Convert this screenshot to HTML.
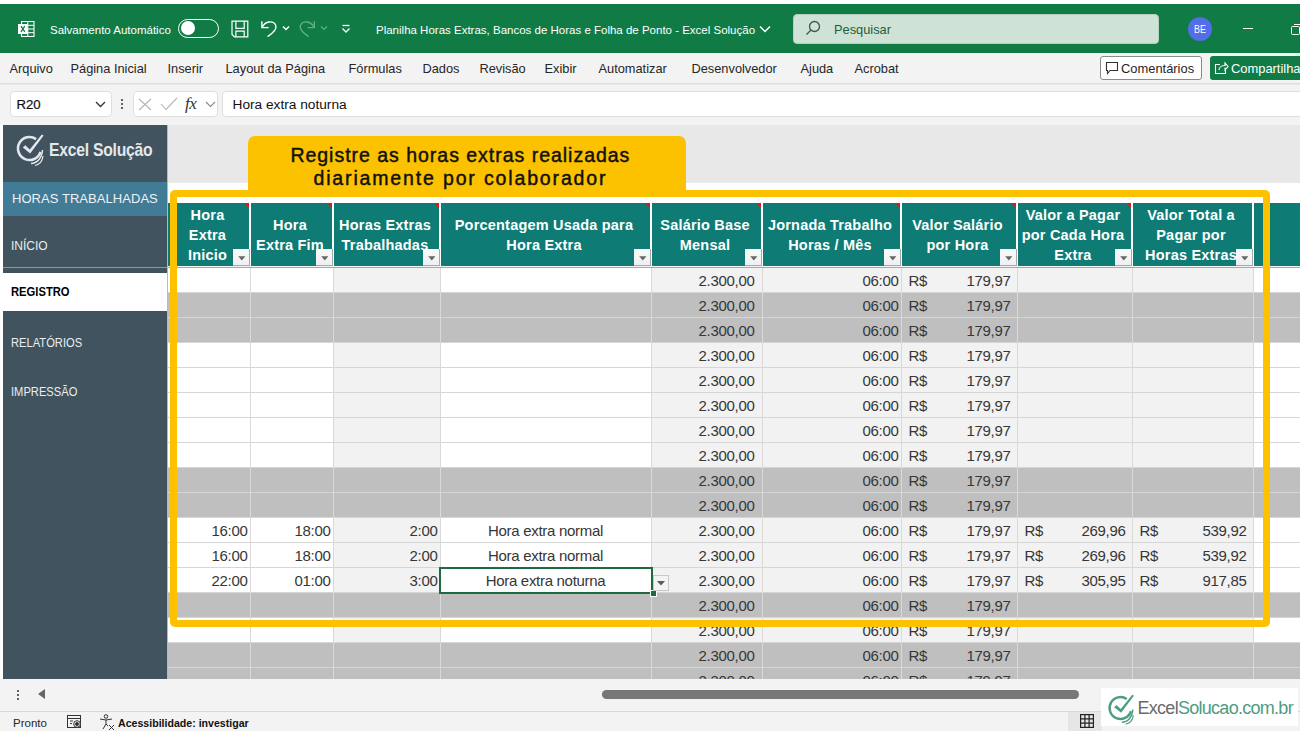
<!DOCTYPE html><html><head><meta charset="utf-8"><style>
html,body{margin:0;padding:0;width:1300px;height:731px;overflow:hidden;background:#f3f3f3}
body{position:relative;font-family:"Liberation Sans", sans-serif}
.b{position:absolute}
.t{position:absolute;white-space:nowrap}
</style></head><body>
<div class="b" style="left:0px;top:0px;width:1300px;height:731px;background:#f3f3f3"></div>
<div class="b" style="left:0px;top:0px;width:1300px;height:4px;background:#ffffff"></div>
<div class="b" style="left:0px;top:4px;width:1300px;height:48.5px;background:#117b46"></div>
<svg class="b" style="left:18px;top:21px" width="17" height="16" viewBox="0 0 17 16">
<rect x="3.5" y="0.5" width="12.5" height="15" fill="none" stroke="#fff" stroke-width="1.1"/>
<line x1="3.5" y1="4.3" x2="16" y2="4.3" stroke="#fff" stroke-width="1"/><line x1="3.5" y1="8" x2="16" y2="8" stroke="#fff" stroke-width="1"/><line x1="3.5" y1="11.7" x2="16" y2="11.7" stroke="#fff" stroke-width="1"/>
<line x1="9.8" y1="0.5" x2="9.8" y2="15.5" stroke="#fff" stroke-width="1"/>
<rect x="0" y="3" width="9.6" height="10" fill="#fff"/>
<path d="M3 5.2 L6.8 10.8 M6.8 5.2 L3 10.8" stroke="#117b46" stroke-width="1.3"/>
</svg>
<div class="t" style="left:50px;top:19.6px;font-size:11.5px;line-height:20px;color:#fff;font-weight:normal;">Salvamento Automático</div>
<div class="b" style="left:178px;top:18.5px;width:41px;height:19px;border:1.5px solid #fff;border-radius:11px;box-sizing:border-box"></div>
<div class="b" style="left:180.5px;top:21px;width:14px;height:14px;background:#fff;border-radius:50%"></div>
<svg class="b" style="left:231px;top:20px" width="18" height="18" viewBox="0 0 18 18" fill="none" stroke="#fff" stroke-width="1.2">
<path d="M1 1.1 H16.8 V16.9 H3.5 L1 14.4 Z"/><path d="M4.9 1.1 V8.4 H13.2 V1.1"/><path d="M4.9 16.9 V11.2 H13.2 V16.9"/>
</svg>
<svg class="b" style="left:260px;top:19px" width="20" height="20" viewBox="0 0 20 20" fill="none" stroke="#fff" stroke-width="1.4">
<path d="M1.9 2.3 V8.6 H8.6"/><path d="M2.2 8.3 C5 2, 13.5 1, 15.8 6.5 C17 10, 13 14, 7.6 17.6"/>
</svg>
<svg class="b" style="left:282px;top:25px" width="8" height="6" viewBox="0 0 8 6" fill="none" stroke="#fff" stroke-width="1.4"><path d="M1 1.5 L4 4.5 L7 1.5"/></svg>
<svg class="b" style="left:299px;top:19px" width="20" height="20" viewBox="0 0 20 20" fill="none" stroke="#5fb080" stroke-width="1.4">
<path d="M15.3 2.3 V8.6 H8.6"/><path d="M15 8.3 C12.2 2, 3.7 1, 1.4 6.5 C0.2 10, 4.2 14, 9.6 17.6"/>
</svg>
<svg class="b" style="left:320px;top:25px" width="8" height="6" viewBox="0 0 8 6" fill="none" stroke="#5fb080" stroke-width="1.2"><path d="M1 1.5 L4 4.5 L7 1.5"/></svg>
<svg class="b" style="left:341px;top:24px" width="10" height="10" viewBox="0 0 10 10" fill="none" stroke="#fff" stroke-width="1.3"><path d="M1.5 1.5 H8.5"/><path d="M1.5 4.5 L5 8 L8.5 4.5"/></svg>
<div class="t" style="left:376px;top:19.7px;font-size:11.5px;line-height:20px;color:#fff;font-weight:normal;">Planilha Horas Extras, Bancos de Horas e Folha de Ponto - Excel Solução</div>
<svg class="b" style="left:759px;top:25px" width="12" height="8" viewBox="0 0 12 8" fill="none" stroke="#fff" stroke-width="1.5"><path d="M1 1.5 L6 6.5 L11 1.5"/></svg>
<div class="b" style="left:793px;top:13.5px;width:366px;height:30px;background:#cee2d6;border:1px solid #b5cfbf;border-radius:4px;box-sizing:border-box"></div>
<svg class="b" style="left:805px;top:20px" width="16" height="16" viewBox="0 0 16 16" fill="none" stroke="#3a5a48" stroke-width="1.3"><circle cx="9.5" cy="6.5" r="5"/><path d="M6 10 L1.5 14.5"/></svg>
<div class="t" style="left:834px;top:19.6px;font-size:12.8px;line-height:20px;color:#1f5e3a;font-weight:normal;">Pesquisar</div>
<div class="b" style="left:1188px;top:17px;width:24px;height:24px;background:#546de8;border-radius:50%"></div>
<div class="t" style="left:900px;width:600px;text-align:center;top:19.0px;font-size:10.5px;line-height:20px;color:#fff;font-weight:normal;transform:scaleX(0.85);">BE</div>
<div class="b" style="left:1243px;top:28px;width:10px;height:1.3px;background:#fff"></div>
<div class="b" style="left:1291px;top:25.5px;width:9px;height:9px;border:1.2px solid #fff;border-radius:1.5px;box-sizing:border-box"></div>
<div class="b" style="left:1293.5px;top:23.5px;width:8px;height:1.2px;background:#fff"></div>
<div class="b" style="left:0px;top:52.5px;width:1300px;height:30.5px;background:#f3f3f3"></div>
<div class="b" style="left:0px;top:83px;width:1300px;height:1px;background:#dcdcdc"></div>
<div class="b" style="left:0px;top:84px;width:1300px;height:1px;background:#e9e9e9"></div>
<div class="t" style="left:9.5px;top:58.8px;font-size:12.8px;line-height:20px;color:#262626;font-weight:normal;">Arquivo</div>
<div class="t" style="left:70.5px;top:58.8px;font-size:12.8px;line-height:20px;color:#262626;font-weight:normal;">Página Inicial</div>
<div class="t" style="left:167.5px;top:58.8px;font-size:12.8px;line-height:20px;color:#262626;font-weight:normal;">Inserir</div>
<div class="t" style="left:225.5px;top:58.8px;font-size:12.8px;line-height:20px;color:#262626;font-weight:normal;">Layout da Página</div>
<div class="t" style="left:348.5px;top:58.8px;font-size:12.8px;line-height:20px;color:#262626;font-weight:normal;">Fórmulas</div>
<div class="t" style="left:422.5px;top:58.8px;font-size:12.8px;line-height:20px;color:#262626;font-weight:normal;">Dados</div>
<div class="t" style="left:479.5px;top:58.8px;font-size:12.8px;line-height:20px;color:#262626;font-weight:normal;">Revisão</div>
<div class="t" style="left:544.5px;top:58.8px;font-size:12.8px;line-height:20px;color:#262626;font-weight:normal;">Exibir</div>
<div class="t" style="left:598.5px;top:58.8px;font-size:12.8px;line-height:20px;color:#262626;font-weight:normal;">Automatizar</div>
<div class="t" style="left:691.5px;top:58.8px;font-size:12.8px;line-height:20px;color:#262626;font-weight:normal;">Desenvolvedor</div>
<div class="t" style="left:800.5px;top:58.8px;font-size:12.8px;line-height:20px;color:#262626;font-weight:normal;">Ajuda</div>
<div class="t" style="left:854.5px;top:58.8px;font-size:12.8px;line-height:20px;color:#262626;font-weight:normal;">Acrobat</div>
<div class="b" style="left:1100px;top:56px;width:102px;height:24px;background:#fff;border:1px solid #8a8a8a;border-radius:3px;box-sizing:border-box"></div>
<svg class="b" style="left:1105px;top:61px" width="14" height="14" viewBox="0 0 14 14" fill="none" stroke="#333" stroke-width="1.1"><path d="M1.5 1.5 H12.5 V9.5 H5 L2.5 12.5 V9.5 H1.5 Z"/></svg>
<div class="t" style="left:1121px;top:58.5px;font-size:12.9px;line-height:20px;color:#262626;font-weight:normal;">Comentários</div>
<div class="b" style="left:1210px;top:56px;width:100px;height:24px;background:#117b46;border-radius:3px"></div>
<svg class="b" style="left:1214px;top:61px" width="15" height="14" viewBox="0 0 15 14" fill="none" stroke="#fff" stroke-width="1.1"><path d="M6 3.5 H1.5 V12.5 H11.5 V9"/><path d="M5 9 C5 6, 8 4.5, 11 4.5 V2 L14 5.5 L11 9 V6.5"/></svg>
<div class="t" style="left:1231px;top:58.5px;font-size:12.9px;line-height:20px;color:#fff;font-weight:normal;">Compartilhar</div>
<div class="b" style="left:0px;top:85px;width:1300px;height:40px;background:#f3f3f3"></div>
<div class="b" style="left:10px;top:91px;width:102px;height:26px;background:#fff;border:1px solid #dedede;border-radius:4px;box-sizing:border-box"></div>
<div class="t" style="left:16.5px;top:94.5px;font-size:13.2px;line-height:20px;color:#111;font-weight:normal;-webkit-text-stroke:0.2px #111;">R20</div>
<svg class="b" style="left:95px;top:101px" width="11" height="7" viewBox="0 0 11 7" fill="none" stroke="#333" stroke-width="1.3"><path d="M1 1 L5.5 5.5 L10 1"/></svg>
<div class="b" style="left:121px;top:99px;width:2.2px;height:2.2px;background:#333;border-radius:50%"></div>
<div class="b" style="left:121px;top:103px;width:2.2px;height:2.2px;background:#333;border-radius:50%"></div>
<div class="b" style="left:121px;top:107px;width:2.2px;height:2.2px;background:#333;border-radius:50%"></div>
<div class="b" style="left:132.5px;top:91px;width:85px;height:26px;background:#fff;border:1px solid #dedede;border-radius:4px;box-sizing:border-box"></div>
<svg class="b" style="left:138px;top:98px" width="14" height="13" viewBox="0 0 14 13" fill="none" stroke="#b5b5b5" stroke-width="1.1"><path d="M1 1 L13 12 M13 1 L1 12"/></svg>
<svg class="b" style="left:160px;top:97px" width="18" height="14" viewBox="0 0 18 14" fill="none" stroke="#b5b5b5" stroke-width="1.1"><path d="M1 7 L6 12.5 L17 1"/></svg>
<div class="t" style="left:185px;top:93.5px;font-size:17px;line-height:20px;color:#333;font-weight:normal;font-family:'Liberation Serif',serif;letter-spacing:-0.5px;"><i>fx</i></div>
<svg class="b" style="left:205px;top:101px" width="11" height="7" viewBox="0 0 11 7" fill="none" stroke="#8a8a8a" stroke-width="1.1"><path d="M1 1 L5.5 5.5 L10 1"/></svg>
<div class="b" style="left:222px;top:91px;width:1100px;height:26px;background:#fff;border:1px solid #dedede;border-radius:4px;box-sizing:border-box"></div>
<div class="t" style="left:232.5px;top:94.5px;font-size:13.7px;line-height:20px;color:#111;font-weight:normal;">Hora extra noturna</div>
<div class="b" style="left:0px;top:125px;width:1300px;height:554px;background:#ffffff"></div>
<div class="b" style="left:168px;top:125px;width:1132px;height:58px;background:#e8e8e8"></div>
<div class="b" style="left:168px;top:183px;width:1132px;height:20px;background:#ffffff"></div>
<div class="b" style="left:3px;top:125px;width:164.2px;height:554px;background:#40535e"></div>
<div class="b" style="left:167.2px;top:125px;width:1px;height:554px;background:#b8b8b8"></div>
<div class="b" style="left:3px;top:182px;width:164.2px;height:34px;background:#427b95"></div>
<div class="t" style="left:12px;top:189.2px;font-size:13px;line-height:20px;color:#eef2f5;font-weight:normal;letter-spacing:0.05px;">HORAS TRABALHADAS</div>
<div class="t" style="left:11px;top:236.3px;font-size:12px;line-height:20px;color:#e9eef1;font-weight:normal;">INÍCIO</div>
<div class="b" style="left:3px;top:267px;width:164px;height:1.2px;background:#8d99a0"></div>
<div class="b" style="left:3px;top:273px;width:164px;height:38px;background:#ffffff"></div>
<div class="t" style="left:11px;top:282.3px;font-size:12px;line-height:20px;color:#000;font-weight:bold;transform:scaleX(0.935);transform-origin:0 0;">REGISTRO</div>
<div class="t" style="left:11px;top:332.5px;font-size:12px;line-height:20px;color:#e9eef1;font-weight:normal;transform:scaleX(0.93);transform-origin:0 0;">RELATÓRIOS</div>
<div class="t" style="left:11px;top:382.3px;font-size:12px;line-height:20px;color:#e9eef1;font-weight:normal;transform:scaleX(0.93);transform-origin:0 0;">IMPRESSÃO</div>
<svg class="b" style="left:0px;top:120px" width="60" height="60" viewBox="0 120 60 60">
<path d="M36.1 139.1 A11.5 11.5 0 1 0 40.5 151.9" fill="none" stroke="#e1e7eb" stroke-width="2.6"/>
<path d="M22.8 147.6 L25.2 145.3 L29.8 149.6 L41.8 134.6 L43.6 135.6 L30.2 153.6 Z" fill="#e1e7eb"/>
<path d="M31 163.5 C37 163.5, 42 158, 42.5 150" fill="none" stroke="#e1e7eb" stroke-width="1.5"/>
<path d="M35 165.5 C39.5 164.5, 42.5 161, 43 156" fill="none" stroke="#e1e7eb" stroke-width="1.2"/>
</svg>
<div class="t" style="left:49px;top:139.8px;font-size:18.5px;line-height:20px;color:#e2e8ec;font-weight:bold;letter-spacing:-0.3px;transform:scaleX(0.85);transform-origin:0 0">Excel Solução</div>
<div class="b" style="left:168px;top:203px;width:1132px;height:62.5px;background:#0e7b74"></div>
<div class="b" style="left:168px;top:265.5px;width:1132px;height:1px;background:#f4f4f4"></div>
<div class="b" style="left:168px;top:266.5px;width:1132px;height:1.5px;background:#a8a8a8"></div>
<div class="b" style="left:249px;top:203px;width:1.8px;height:63px;background:#ffffff"></div>
<div class="b" style="left:332px;top:203px;width:1.8px;height:63px;background:#ffffff"></div>
<div class="b" style="left:439px;top:203px;width:1.8px;height:63px;background:#ffffff"></div>
<div class="b" style="left:650px;top:203px;width:1.8px;height:63px;background:#ffffff"></div>
<div class="b" style="left:761px;top:203px;width:1.8px;height:63px;background:#ffffff"></div>
<div class="b" style="left:900px;top:203px;width:1.8px;height:63px;background:#ffffff"></div>
<div class="b" style="left:1016px;top:203px;width:1.8px;height:63px;background:#ffffff"></div>
<div class="b" style="left:1131px;top:203px;width:1.8px;height:63px;background:#ffffff"></div>
<div class="b" style="left:1252px;top:203px;width:1.8px;height:63px;background:#ffffff"></div>
<div class="b" style="left:176px;top:268px;width:74px;height:25px;background:#ffffff"></div>
<div class="b" style="left:250px;top:268px;width:83px;height:25px;background:#ffffff"></div>
<div class="b" style="left:333px;top:268px;width:107px;height:25px;background:#f2f2f2"></div>
<div class="b" style="left:440px;top:268px;width:211px;height:25px;background:#ffffff"></div>
<div class="b" style="left:651px;top:268px;width:111px;height:25px;background:#f2f2f2"></div>
<div class="b" style="left:762px;top:268px;width:139px;height:25px;background:#f2f2f2"></div>
<div class="b" style="left:901px;top:268px;width:116px;height:25px;background:#f2f2f2"></div>
<div class="b" style="left:1017px;top:268px;width:115px;height:25px;background:#f2f2f2"></div>
<div class="b" style="left:1132px;top:268px;width:121px;height:25px;background:#f2f2f2"></div>
<div class="b" style="left:1253px;top:268px;width:47px;height:25px;background:#ffffff"></div>
<div class="b" style="left:168px;top:292px;width:1132px;height:1px;background:#d6d6d6"></div>
<div class="b" style="left:168px;top:293px;width:1132px;height:25px;background:#bfbfbf"></div>
<div class="b" style="left:168px;top:317px;width:1132px;height:1px;background:#d6d6d6"></div>
<div class="b" style="left:168px;top:318px;width:1132px;height:25px;background:#bfbfbf"></div>
<div class="b" style="left:168px;top:342px;width:1132px;height:1px;background:#d6d6d6"></div>
<div class="b" style="left:176px;top:343px;width:74px;height:25px;background:#ffffff"></div>
<div class="b" style="left:250px;top:343px;width:83px;height:25px;background:#ffffff"></div>
<div class="b" style="left:333px;top:343px;width:107px;height:25px;background:#f2f2f2"></div>
<div class="b" style="left:440px;top:343px;width:211px;height:25px;background:#ffffff"></div>
<div class="b" style="left:651px;top:343px;width:111px;height:25px;background:#f2f2f2"></div>
<div class="b" style="left:762px;top:343px;width:139px;height:25px;background:#f2f2f2"></div>
<div class="b" style="left:901px;top:343px;width:116px;height:25px;background:#f2f2f2"></div>
<div class="b" style="left:1017px;top:343px;width:115px;height:25px;background:#f2f2f2"></div>
<div class="b" style="left:1132px;top:343px;width:121px;height:25px;background:#f2f2f2"></div>
<div class="b" style="left:1253px;top:343px;width:47px;height:25px;background:#ffffff"></div>
<div class="b" style="left:168px;top:367px;width:1132px;height:1px;background:#d6d6d6"></div>
<div class="b" style="left:176px;top:368px;width:74px;height:25px;background:#ffffff"></div>
<div class="b" style="left:250px;top:368px;width:83px;height:25px;background:#ffffff"></div>
<div class="b" style="left:333px;top:368px;width:107px;height:25px;background:#f2f2f2"></div>
<div class="b" style="left:440px;top:368px;width:211px;height:25px;background:#ffffff"></div>
<div class="b" style="left:651px;top:368px;width:111px;height:25px;background:#f2f2f2"></div>
<div class="b" style="left:762px;top:368px;width:139px;height:25px;background:#f2f2f2"></div>
<div class="b" style="left:901px;top:368px;width:116px;height:25px;background:#f2f2f2"></div>
<div class="b" style="left:1017px;top:368px;width:115px;height:25px;background:#f2f2f2"></div>
<div class="b" style="left:1132px;top:368px;width:121px;height:25px;background:#f2f2f2"></div>
<div class="b" style="left:1253px;top:368px;width:47px;height:25px;background:#ffffff"></div>
<div class="b" style="left:168px;top:392px;width:1132px;height:1px;background:#d6d6d6"></div>
<div class="b" style="left:176px;top:393px;width:74px;height:25px;background:#ffffff"></div>
<div class="b" style="left:250px;top:393px;width:83px;height:25px;background:#ffffff"></div>
<div class="b" style="left:333px;top:393px;width:107px;height:25px;background:#f2f2f2"></div>
<div class="b" style="left:440px;top:393px;width:211px;height:25px;background:#ffffff"></div>
<div class="b" style="left:651px;top:393px;width:111px;height:25px;background:#f2f2f2"></div>
<div class="b" style="left:762px;top:393px;width:139px;height:25px;background:#f2f2f2"></div>
<div class="b" style="left:901px;top:393px;width:116px;height:25px;background:#f2f2f2"></div>
<div class="b" style="left:1017px;top:393px;width:115px;height:25px;background:#f2f2f2"></div>
<div class="b" style="left:1132px;top:393px;width:121px;height:25px;background:#f2f2f2"></div>
<div class="b" style="left:1253px;top:393px;width:47px;height:25px;background:#ffffff"></div>
<div class="b" style="left:168px;top:417px;width:1132px;height:1px;background:#d6d6d6"></div>
<div class="b" style="left:176px;top:418px;width:74px;height:25px;background:#ffffff"></div>
<div class="b" style="left:250px;top:418px;width:83px;height:25px;background:#ffffff"></div>
<div class="b" style="left:333px;top:418px;width:107px;height:25px;background:#f2f2f2"></div>
<div class="b" style="left:440px;top:418px;width:211px;height:25px;background:#ffffff"></div>
<div class="b" style="left:651px;top:418px;width:111px;height:25px;background:#f2f2f2"></div>
<div class="b" style="left:762px;top:418px;width:139px;height:25px;background:#f2f2f2"></div>
<div class="b" style="left:901px;top:418px;width:116px;height:25px;background:#f2f2f2"></div>
<div class="b" style="left:1017px;top:418px;width:115px;height:25px;background:#f2f2f2"></div>
<div class="b" style="left:1132px;top:418px;width:121px;height:25px;background:#f2f2f2"></div>
<div class="b" style="left:1253px;top:418px;width:47px;height:25px;background:#ffffff"></div>
<div class="b" style="left:168px;top:442px;width:1132px;height:1px;background:#d6d6d6"></div>
<div class="b" style="left:176px;top:443px;width:74px;height:25px;background:#ffffff"></div>
<div class="b" style="left:250px;top:443px;width:83px;height:25px;background:#ffffff"></div>
<div class="b" style="left:333px;top:443px;width:107px;height:25px;background:#f2f2f2"></div>
<div class="b" style="left:440px;top:443px;width:211px;height:25px;background:#ffffff"></div>
<div class="b" style="left:651px;top:443px;width:111px;height:25px;background:#f2f2f2"></div>
<div class="b" style="left:762px;top:443px;width:139px;height:25px;background:#f2f2f2"></div>
<div class="b" style="left:901px;top:443px;width:116px;height:25px;background:#f2f2f2"></div>
<div class="b" style="left:1017px;top:443px;width:115px;height:25px;background:#f2f2f2"></div>
<div class="b" style="left:1132px;top:443px;width:121px;height:25px;background:#f2f2f2"></div>
<div class="b" style="left:1253px;top:443px;width:47px;height:25px;background:#ffffff"></div>
<div class="b" style="left:168px;top:467px;width:1132px;height:1px;background:#d6d6d6"></div>
<div class="b" style="left:168px;top:468px;width:1132px;height:25px;background:#bfbfbf"></div>
<div class="b" style="left:168px;top:492px;width:1132px;height:1px;background:#d6d6d6"></div>
<div class="b" style="left:168px;top:493px;width:1132px;height:25px;background:#bfbfbf"></div>
<div class="b" style="left:168px;top:517px;width:1132px;height:1px;background:#d6d6d6"></div>
<div class="b" style="left:176px;top:518px;width:74px;height:25px;background:#ffffff"></div>
<div class="b" style="left:250px;top:518px;width:83px;height:25px;background:#ffffff"></div>
<div class="b" style="left:333px;top:518px;width:107px;height:25px;background:#f2f2f2"></div>
<div class="b" style="left:440px;top:518px;width:211px;height:25px;background:#ffffff"></div>
<div class="b" style="left:651px;top:518px;width:111px;height:25px;background:#f2f2f2"></div>
<div class="b" style="left:762px;top:518px;width:139px;height:25px;background:#f2f2f2"></div>
<div class="b" style="left:901px;top:518px;width:116px;height:25px;background:#f2f2f2"></div>
<div class="b" style="left:1017px;top:518px;width:115px;height:25px;background:#f2f2f2"></div>
<div class="b" style="left:1132px;top:518px;width:121px;height:25px;background:#f2f2f2"></div>
<div class="b" style="left:1253px;top:518px;width:47px;height:25px;background:#ffffff"></div>
<div class="b" style="left:168px;top:542px;width:1132px;height:1px;background:#d6d6d6"></div>
<div class="b" style="left:176px;top:543px;width:74px;height:25px;background:#ffffff"></div>
<div class="b" style="left:250px;top:543px;width:83px;height:25px;background:#ffffff"></div>
<div class="b" style="left:333px;top:543px;width:107px;height:25px;background:#f2f2f2"></div>
<div class="b" style="left:440px;top:543px;width:211px;height:25px;background:#ffffff"></div>
<div class="b" style="left:651px;top:543px;width:111px;height:25px;background:#f2f2f2"></div>
<div class="b" style="left:762px;top:543px;width:139px;height:25px;background:#f2f2f2"></div>
<div class="b" style="left:901px;top:543px;width:116px;height:25px;background:#f2f2f2"></div>
<div class="b" style="left:1017px;top:543px;width:115px;height:25px;background:#f2f2f2"></div>
<div class="b" style="left:1132px;top:543px;width:121px;height:25px;background:#f2f2f2"></div>
<div class="b" style="left:1253px;top:543px;width:47px;height:25px;background:#ffffff"></div>
<div class="b" style="left:168px;top:567px;width:1132px;height:1px;background:#d6d6d6"></div>
<div class="b" style="left:176px;top:568px;width:74px;height:25px;background:#ffffff"></div>
<div class="b" style="left:250px;top:568px;width:83px;height:25px;background:#ffffff"></div>
<div class="b" style="left:333px;top:568px;width:107px;height:25px;background:#f2f2f2"></div>
<div class="b" style="left:440px;top:568px;width:211px;height:25px;background:#ffffff"></div>
<div class="b" style="left:651px;top:568px;width:111px;height:25px;background:#f2f2f2"></div>
<div class="b" style="left:762px;top:568px;width:139px;height:25px;background:#f2f2f2"></div>
<div class="b" style="left:901px;top:568px;width:116px;height:25px;background:#f2f2f2"></div>
<div class="b" style="left:1017px;top:568px;width:115px;height:25px;background:#f2f2f2"></div>
<div class="b" style="left:1132px;top:568px;width:121px;height:25px;background:#f2f2f2"></div>
<div class="b" style="left:1253px;top:568px;width:47px;height:25px;background:#ffffff"></div>
<div class="b" style="left:168px;top:592px;width:1132px;height:1px;background:#d6d6d6"></div>
<div class="b" style="left:168px;top:593px;width:1132px;height:25px;background:#bfbfbf"></div>
<div class="b" style="left:168px;top:617px;width:1132px;height:1px;background:#d6d6d6"></div>
<div class="b" style="left:176px;top:618px;width:74px;height:25px;background:#ffffff"></div>
<div class="b" style="left:250px;top:618px;width:83px;height:25px;background:#ffffff"></div>
<div class="b" style="left:333px;top:618px;width:107px;height:25px;background:#f2f2f2"></div>
<div class="b" style="left:440px;top:618px;width:211px;height:25px;background:#ffffff"></div>
<div class="b" style="left:651px;top:618px;width:111px;height:25px;background:#f2f2f2"></div>
<div class="b" style="left:762px;top:618px;width:139px;height:25px;background:#f2f2f2"></div>
<div class="b" style="left:901px;top:618px;width:116px;height:25px;background:#f2f2f2"></div>
<div class="b" style="left:1017px;top:618px;width:115px;height:25px;background:#f2f2f2"></div>
<div class="b" style="left:1132px;top:618px;width:121px;height:25px;background:#f2f2f2"></div>
<div class="b" style="left:1253px;top:618px;width:47px;height:25px;background:#ffffff"></div>
<div class="b" style="left:168px;top:642px;width:1132px;height:1px;background:#d6d6d6"></div>
<div class="b" style="left:168px;top:643px;width:1132px;height:25px;background:#bfbfbf"></div>
<div class="b" style="left:168px;top:667px;width:1132px;height:1px;background:#d6d6d6"></div>
<div class="b" style="left:168px;top:668px;width:1132px;height:11px;background:#bfbfbf"></div>
<div class="b" style="left:250px;top:268px;width:1px;height:411px;background:#d9d9d9"></div>
<div class="b" style="left:333px;top:268px;width:1px;height:411px;background:#d9d9d9"></div>
<div class="b" style="left:440px;top:268px;width:1px;height:411px;background:#d9d9d9"></div>
<div class="b" style="left:651px;top:268px;width:1px;height:411px;background:#d9d9d9"></div>
<div class="b" style="left:762px;top:268px;width:1px;height:411px;background:#d9d9d9"></div>
<div class="b" style="left:901px;top:268px;width:1px;height:411px;background:#d9d9d9"></div>
<div class="b" style="left:1017px;top:268px;width:1px;height:411px;background:#d9d9d9"></div>
<div class="b" style="left:1132px;top:268px;width:1px;height:411px;background:#d9d9d9"></div>
<div class="b" style="left:1253px;top:268px;width:1px;height:411px;background:#d9d9d9"></div>
<div class="t" style="left:-92.5px;width:600px;text-align:center;top:205.0px;font-size:14.5px;line-height:20px;color:#ffffff;font-weight:bold;letter-spacing:0.2px;">Hora</div>
<div class="t" style="left:-92.5px;width:600px;text-align:center;top:225.0px;font-size:14.5px;line-height:20px;color:#ffffff;font-weight:bold;letter-spacing:0.2px;">Extra</div>
<div class="t" style="left:-92.5px;width:600px;text-align:center;top:245.0px;font-size:14.5px;line-height:20px;color:#ffffff;font-weight:bold;letter-spacing:0.2px;">Inicio</div>
<div class="t" style="left:-10.0px;width:600px;text-align:center;top:214.5px;font-size:14.5px;line-height:20px;color:#ffffff;font-weight:bold;letter-spacing:0.2px;">Hora</div>
<div class="t" style="left:-10.0px;width:600px;text-align:center;top:234.5px;font-size:14.5px;line-height:20px;color:#ffffff;font-weight:bold;letter-spacing:0.2px;">Extra Fim</div>
<div class="t" style="left:85.0px;width:600px;text-align:center;top:214.5px;font-size:14.5px;line-height:20px;color:#ffffff;font-weight:bold;letter-spacing:0.2px;">Horas Extras</div>
<div class="t" style="left:85.0px;width:600px;text-align:center;top:234.5px;font-size:14.5px;line-height:20px;color:#ffffff;font-weight:bold;letter-spacing:0.2px;">Trabalhadas</div>
<div class="t" style="left:244.0px;width:600px;text-align:center;top:214.5px;font-size:14.5px;line-height:20px;color:#ffffff;font-weight:bold;letter-spacing:0.2px;">Porcentagem Usada para</div>
<div class="t" style="left:244.0px;width:600px;text-align:center;top:234.5px;font-size:14.5px;line-height:20px;color:#ffffff;font-weight:bold;letter-spacing:0.2px;">Hora Extra</div>
<div class="t" style="left:405.0px;width:600px;text-align:center;top:214.5px;font-size:14.5px;line-height:20px;color:#ffffff;font-weight:bold;letter-spacing:0.2px;">Salário Base</div>
<div class="t" style="left:405.0px;width:600px;text-align:center;top:234.5px;font-size:14.5px;line-height:20px;color:#ffffff;font-weight:bold;letter-spacing:0.2px;">Mensal</div>
<div class="t" style="left:530.0px;width:600px;text-align:center;top:214.5px;font-size:14.5px;line-height:20px;color:#ffffff;font-weight:bold;letter-spacing:0.2px;">Jornada Trabalho</div>
<div class="t" style="left:530.0px;width:600px;text-align:center;top:234.5px;font-size:14.5px;line-height:20px;color:#ffffff;font-weight:bold;letter-spacing:0.2px;">Horas / Mês</div>
<div class="t" style="left:657.5px;width:600px;text-align:center;top:214.5px;font-size:14.5px;line-height:20px;color:#ffffff;font-weight:bold;letter-spacing:0.2px;">Valor Salário</div>
<div class="t" style="left:657.5px;width:600px;text-align:center;top:234.5px;font-size:14.5px;line-height:20px;color:#ffffff;font-weight:bold;letter-spacing:0.2px;">por Hora</div>
<div class="t" style="left:773.0px;width:600px;text-align:center;top:205.0px;font-size:14.5px;line-height:20px;color:#ffffff;font-weight:bold;letter-spacing:0.2px;">Valor a Pagar</div>
<div class="t" style="left:773.0px;width:600px;text-align:center;top:225.0px;font-size:14.5px;line-height:20px;color:#ffffff;font-weight:bold;letter-spacing:0.2px;">por Cada Hora</div>
<div class="t" style="left:773.0px;width:600px;text-align:center;top:245.0px;font-size:14.5px;line-height:20px;color:#ffffff;font-weight:bold;letter-spacing:0.2px;">Extra</div>
<div class="t" style="left:891.0px;width:600px;text-align:center;top:205.0px;font-size:14.5px;line-height:20px;color:#ffffff;font-weight:bold;letter-spacing:0.2px;">Valor Total a</div>
<div class="t" style="left:891.0px;width:600px;text-align:center;top:225.0px;font-size:14.5px;line-height:20px;color:#ffffff;font-weight:bold;letter-spacing:0.2px;">Pagar por</div>
<div class="t" style="left:891.0px;width:600px;text-align:center;top:245.0px;font-size:14.5px;line-height:20px;color:#ffffff;font-weight:bold;letter-spacing:0.2px;">Horas Extras</div>
<div class="b" style="left:233px;top:249px;width:16.8px;height:16.5px;background:linear-gradient(#fbfbfb,#eeeff2);border-right:1px solid #a8a8a8;border-bottom:1px solid #a8a8a8;box-sizing:border-box"></div>
<svg class="b" style="left:237.5px;top:255.5px" width="8" height="5" viewBox="0 0 8 5"><path d="M0.2 0.2 H7.4 L3.8 4.4 Z" fill="#666"/></svg>
<div class="b" style="left:316px;top:249px;width:16.8px;height:16.5px;background:linear-gradient(#fbfbfb,#eeeff2);border-right:1px solid #a8a8a8;border-bottom:1px solid #a8a8a8;box-sizing:border-box"></div>
<svg class="b" style="left:320.5px;top:255.5px" width="8" height="5" viewBox="0 0 8 5"><path d="M0.2 0.2 H7.4 L3.8 4.4 Z" fill="#666"/></svg>
<div class="b" style="left:423px;top:249px;width:16.8px;height:16.5px;background:linear-gradient(#fbfbfb,#eeeff2);border-right:1px solid #a8a8a8;border-bottom:1px solid #a8a8a8;box-sizing:border-box"></div>
<svg class="b" style="left:427.5px;top:255.5px" width="8" height="5" viewBox="0 0 8 5"><path d="M0.2 0.2 H7.4 L3.8 4.4 Z" fill="#666"/></svg>
<div class="b" style="left:634px;top:249px;width:16.8px;height:16.5px;background:linear-gradient(#fbfbfb,#eeeff2);border-right:1px solid #a8a8a8;border-bottom:1px solid #a8a8a8;box-sizing:border-box"></div>
<svg class="b" style="left:638.5px;top:255.5px" width="8" height="5" viewBox="0 0 8 5"><path d="M0.2 0.2 H7.4 L3.8 4.4 Z" fill="#666"/></svg>
<div class="b" style="left:745px;top:249px;width:16.8px;height:16.5px;background:linear-gradient(#fbfbfb,#eeeff2);border-right:1px solid #a8a8a8;border-bottom:1px solid #a8a8a8;box-sizing:border-box"></div>
<svg class="b" style="left:749.5px;top:255.5px" width="8" height="5" viewBox="0 0 8 5"><path d="M0.2 0.2 H7.4 L3.8 4.4 Z" fill="#666"/></svg>
<div class="b" style="left:884px;top:249px;width:16.8px;height:16.5px;background:linear-gradient(#fbfbfb,#eeeff2);border-right:1px solid #a8a8a8;border-bottom:1px solid #a8a8a8;box-sizing:border-box"></div>
<svg class="b" style="left:888.5px;top:255.5px" width="8" height="5" viewBox="0 0 8 5"><path d="M0.2 0.2 H7.4 L3.8 4.4 Z" fill="#666"/></svg>
<div class="b" style="left:1000px;top:249px;width:16.8px;height:16.5px;background:linear-gradient(#fbfbfb,#eeeff2);border-right:1px solid #a8a8a8;border-bottom:1px solid #a8a8a8;box-sizing:border-box"></div>
<svg class="b" style="left:1004.5px;top:255.5px" width="8" height="5" viewBox="0 0 8 5"><path d="M0.2 0.2 H7.4 L3.8 4.4 Z" fill="#666"/></svg>
<div class="b" style="left:1115px;top:249px;width:16.8px;height:16.5px;background:linear-gradient(#fbfbfb,#eeeff2);border-right:1px solid #a8a8a8;border-bottom:1px solid #a8a8a8;box-sizing:border-box"></div>
<svg class="b" style="left:1119.5px;top:255.5px" width="8" height="5" viewBox="0 0 8 5"><path d="M0.2 0.2 H7.4 L3.8 4.4 Z" fill="#666"/></svg>
<div class="b" style="left:1236px;top:249px;width:16.8px;height:16.5px;background:linear-gradient(#fbfbfb,#eeeff2);border-right:1px solid #a8a8a8;border-bottom:1px solid #a8a8a8;box-sizing:border-box"></div>
<svg class="b" style="left:1240.5px;top:255.5px" width="8" height="5" viewBox="0 0 8 5"><path d="M0.2 0.2 H7.4 L3.8 4.4 Z" fill="#666"/></svg>
<svg class="b" style="left:243.5px;top:203px" width="5" height="5" viewBox="0 0 5 5"><path d="M0 0 H5 V5 Z" fill="#e01818"/></svg>
<svg class="b" style="left:326.5px;top:203px" width="5" height="5" viewBox="0 0 5 5"><path d="M0 0 H5 V5 Z" fill="#e01818"/></svg>
<svg class="b" style="left:433.5px;top:203px" width="5" height="5" viewBox="0 0 5 5"><path d="M0 0 H5 V5 Z" fill="#e01818"/></svg>
<svg class="b" style="left:644.5px;top:203px" width="5" height="5" viewBox="0 0 5 5"><path d="M0 0 H5 V5 Z" fill="#e01818"/></svg>
<svg class="b" style="left:755.5px;top:203px" width="5" height="5" viewBox="0 0 5 5"><path d="M0 0 H5 V5 Z" fill="#e01818"/></svg>
<svg class="b" style="left:894.5px;top:203px" width="5" height="5" viewBox="0 0 5 5"><path d="M0 0 H5 V5 Z" fill="#e01818"/></svg>
<svg class="b" style="left:1010.5px;top:203px" width="5" height="5" viewBox="0 0 5 5"><path d="M0 0 H5 V5 Z" fill="#e01818"/></svg>
<svg class="b" style="left:1125.5px;top:203px" width="5" height="5" viewBox="0 0 5 5"><path d="M0 0 H5 V5 Z" fill="#e01818"/></svg>
<div class="t" style="left:354.5px;width:400px;text-align:right;top:270.9px;font-size:15px;line-height:20px;color:#363636;font-weight:normal;letter-spacing:-0.3px;">2.300,00</div>
<div class="t" style="left:498.5px;width:400px;text-align:right;top:270.9px;font-size:15px;line-height:20px;color:#363636;font-weight:normal;letter-spacing:-0.3px;">06:00</div>
<div class="t" style="left:908.5px;top:270.9px;font-size:15px;line-height:20px;color:#363636;font-weight:normal;letter-spacing:-0.3px;">R$</div>
<div class="t" style="left:610.5px;width:400px;text-align:right;top:270.9px;font-size:15px;line-height:20px;color:#363636;font-weight:normal;letter-spacing:-0.3px;">179,97</div>
<div class="t" style="left:354.5px;width:400px;text-align:right;top:295.9px;font-size:15px;line-height:20px;color:#363636;font-weight:normal;letter-spacing:-0.3px;">2.300,00</div>
<div class="t" style="left:498.5px;width:400px;text-align:right;top:295.9px;font-size:15px;line-height:20px;color:#363636;font-weight:normal;letter-spacing:-0.3px;">06:00</div>
<div class="t" style="left:908.5px;top:295.9px;font-size:15px;line-height:20px;color:#363636;font-weight:normal;letter-spacing:-0.3px;">R$</div>
<div class="t" style="left:610.5px;width:400px;text-align:right;top:295.9px;font-size:15px;line-height:20px;color:#363636;font-weight:normal;letter-spacing:-0.3px;">179,97</div>
<div class="t" style="left:354.5px;width:400px;text-align:right;top:320.9px;font-size:15px;line-height:20px;color:#363636;font-weight:normal;letter-spacing:-0.3px;">2.300,00</div>
<div class="t" style="left:498.5px;width:400px;text-align:right;top:320.9px;font-size:15px;line-height:20px;color:#363636;font-weight:normal;letter-spacing:-0.3px;">06:00</div>
<div class="t" style="left:908.5px;top:320.9px;font-size:15px;line-height:20px;color:#363636;font-weight:normal;letter-spacing:-0.3px;">R$</div>
<div class="t" style="left:610.5px;width:400px;text-align:right;top:320.9px;font-size:15px;line-height:20px;color:#363636;font-weight:normal;letter-spacing:-0.3px;">179,97</div>
<div class="t" style="left:354.5px;width:400px;text-align:right;top:345.9px;font-size:15px;line-height:20px;color:#363636;font-weight:normal;letter-spacing:-0.3px;">2.300,00</div>
<div class="t" style="left:498.5px;width:400px;text-align:right;top:345.9px;font-size:15px;line-height:20px;color:#363636;font-weight:normal;letter-spacing:-0.3px;">06:00</div>
<div class="t" style="left:908.5px;top:345.9px;font-size:15px;line-height:20px;color:#363636;font-weight:normal;letter-spacing:-0.3px;">R$</div>
<div class="t" style="left:610.5px;width:400px;text-align:right;top:345.9px;font-size:15px;line-height:20px;color:#363636;font-weight:normal;letter-spacing:-0.3px;">179,97</div>
<div class="t" style="left:354.5px;width:400px;text-align:right;top:370.9px;font-size:15px;line-height:20px;color:#363636;font-weight:normal;letter-spacing:-0.3px;">2.300,00</div>
<div class="t" style="left:498.5px;width:400px;text-align:right;top:370.9px;font-size:15px;line-height:20px;color:#363636;font-weight:normal;letter-spacing:-0.3px;">06:00</div>
<div class="t" style="left:908.5px;top:370.9px;font-size:15px;line-height:20px;color:#363636;font-weight:normal;letter-spacing:-0.3px;">R$</div>
<div class="t" style="left:610.5px;width:400px;text-align:right;top:370.9px;font-size:15px;line-height:20px;color:#363636;font-weight:normal;letter-spacing:-0.3px;">179,97</div>
<div class="t" style="left:354.5px;width:400px;text-align:right;top:395.9px;font-size:15px;line-height:20px;color:#363636;font-weight:normal;letter-spacing:-0.3px;">2.300,00</div>
<div class="t" style="left:498.5px;width:400px;text-align:right;top:395.9px;font-size:15px;line-height:20px;color:#363636;font-weight:normal;letter-spacing:-0.3px;">06:00</div>
<div class="t" style="left:908.5px;top:395.9px;font-size:15px;line-height:20px;color:#363636;font-weight:normal;letter-spacing:-0.3px;">R$</div>
<div class="t" style="left:610.5px;width:400px;text-align:right;top:395.9px;font-size:15px;line-height:20px;color:#363636;font-weight:normal;letter-spacing:-0.3px;">179,97</div>
<div class="t" style="left:354.5px;width:400px;text-align:right;top:420.9px;font-size:15px;line-height:20px;color:#363636;font-weight:normal;letter-spacing:-0.3px;">2.300,00</div>
<div class="t" style="left:498.5px;width:400px;text-align:right;top:420.9px;font-size:15px;line-height:20px;color:#363636;font-weight:normal;letter-spacing:-0.3px;">06:00</div>
<div class="t" style="left:908.5px;top:420.9px;font-size:15px;line-height:20px;color:#363636;font-weight:normal;letter-spacing:-0.3px;">R$</div>
<div class="t" style="left:610.5px;width:400px;text-align:right;top:420.9px;font-size:15px;line-height:20px;color:#363636;font-weight:normal;letter-spacing:-0.3px;">179,97</div>
<div class="t" style="left:354.5px;width:400px;text-align:right;top:445.9px;font-size:15px;line-height:20px;color:#363636;font-weight:normal;letter-spacing:-0.3px;">2.300,00</div>
<div class="t" style="left:498.5px;width:400px;text-align:right;top:445.9px;font-size:15px;line-height:20px;color:#363636;font-weight:normal;letter-spacing:-0.3px;">06:00</div>
<div class="t" style="left:908.5px;top:445.9px;font-size:15px;line-height:20px;color:#363636;font-weight:normal;letter-spacing:-0.3px;">R$</div>
<div class="t" style="left:610.5px;width:400px;text-align:right;top:445.9px;font-size:15px;line-height:20px;color:#363636;font-weight:normal;letter-spacing:-0.3px;">179,97</div>
<div class="t" style="left:354.5px;width:400px;text-align:right;top:470.9px;font-size:15px;line-height:20px;color:#363636;font-weight:normal;letter-spacing:-0.3px;">2.300,00</div>
<div class="t" style="left:498.5px;width:400px;text-align:right;top:470.9px;font-size:15px;line-height:20px;color:#363636;font-weight:normal;letter-spacing:-0.3px;">06:00</div>
<div class="t" style="left:908.5px;top:470.9px;font-size:15px;line-height:20px;color:#363636;font-weight:normal;letter-spacing:-0.3px;">R$</div>
<div class="t" style="left:610.5px;width:400px;text-align:right;top:470.9px;font-size:15px;line-height:20px;color:#363636;font-weight:normal;letter-spacing:-0.3px;">179,97</div>
<div class="t" style="left:354.5px;width:400px;text-align:right;top:495.9px;font-size:15px;line-height:20px;color:#363636;font-weight:normal;letter-spacing:-0.3px;">2.300,00</div>
<div class="t" style="left:498.5px;width:400px;text-align:right;top:495.9px;font-size:15px;line-height:20px;color:#363636;font-weight:normal;letter-spacing:-0.3px;">06:00</div>
<div class="t" style="left:908.5px;top:495.9px;font-size:15px;line-height:20px;color:#363636;font-weight:normal;letter-spacing:-0.3px;">R$</div>
<div class="t" style="left:610.5px;width:400px;text-align:right;top:495.9px;font-size:15px;line-height:20px;color:#363636;font-weight:normal;letter-spacing:-0.3px;">179,97</div>
<div class="t" style="left:354.5px;width:400px;text-align:right;top:520.9px;font-size:15px;line-height:20px;color:#363636;font-weight:normal;letter-spacing:-0.3px;">2.300,00</div>
<div class="t" style="left:498.5px;width:400px;text-align:right;top:520.9px;font-size:15px;line-height:20px;color:#363636;font-weight:normal;letter-spacing:-0.3px;">06:00</div>
<div class="t" style="left:908.5px;top:520.9px;font-size:15px;line-height:20px;color:#363636;font-weight:normal;letter-spacing:-0.3px;">R$</div>
<div class="t" style="left:610.5px;width:400px;text-align:right;top:520.9px;font-size:15px;line-height:20px;color:#363636;font-weight:normal;letter-spacing:-0.3px;">179,97</div>
<div class="t" style="left:354.5px;width:400px;text-align:right;top:545.9px;font-size:15px;line-height:20px;color:#363636;font-weight:normal;letter-spacing:-0.3px;">2.300,00</div>
<div class="t" style="left:498.5px;width:400px;text-align:right;top:545.9px;font-size:15px;line-height:20px;color:#363636;font-weight:normal;letter-spacing:-0.3px;">06:00</div>
<div class="t" style="left:908.5px;top:545.9px;font-size:15px;line-height:20px;color:#363636;font-weight:normal;letter-spacing:-0.3px;">R$</div>
<div class="t" style="left:610.5px;width:400px;text-align:right;top:545.9px;font-size:15px;line-height:20px;color:#363636;font-weight:normal;letter-spacing:-0.3px;">179,97</div>
<div class="t" style="left:354.5px;width:400px;text-align:right;top:570.9px;font-size:15px;line-height:20px;color:#363636;font-weight:normal;letter-spacing:-0.3px;">2.300,00</div>
<div class="t" style="left:498.5px;width:400px;text-align:right;top:570.9px;font-size:15px;line-height:20px;color:#363636;font-weight:normal;letter-spacing:-0.3px;">06:00</div>
<div class="t" style="left:908.5px;top:570.9px;font-size:15px;line-height:20px;color:#363636;font-weight:normal;letter-spacing:-0.3px;">R$</div>
<div class="t" style="left:610.5px;width:400px;text-align:right;top:570.9px;font-size:15px;line-height:20px;color:#363636;font-weight:normal;letter-spacing:-0.3px;">179,97</div>
<div class="t" style="left:354.5px;width:400px;text-align:right;top:595.9px;font-size:15px;line-height:20px;color:#363636;font-weight:normal;letter-spacing:-0.3px;">2.300,00</div>
<div class="t" style="left:498.5px;width:400px;text-align:right;top:595.9px;font-size:15px;line-height:20px;color:#363636;font-weight:normal;letter-spacing:-0.3px;">06:00</div>
<div class="t" style="left:908.5px;top:595.9px;font-size:15px;line-height:20px;color:#363636;font-weight:normal;letter-spacing:-0.3px;">R$</div>
<div class="t" style="left:610.5px;width:400px;text-align:right;top:595.9px;font-size:15px;line-height:20px;color:#363636;font-weight:normal;letter-spacing:-0.3px;">179,97</div>
<div class="t" style="left:354.5px;width:400px;text-align:right;top:620.9px;font-size:15px;line-height:20px;color:#363636;font-weight:normal;letter-spacing:-0.3px;">2.300,00</div>
<div class="t" style="left:498.5px;width:400px;text-align:right;top:620.9px;font-size:15px;line-height:20px;color:#363636;font-weight:normal;letter-spacing:-0.3px;">06:00</div>
<div class="t" style="left:908.5px;top:620.9px;font-size:15px;line-height:20px;color:#363636;font-weight:normal;letter-spacing:-0.3px;">R$</div>
<div class="t" style="left:610.5px;width:400px;text-align:right;top:620.9px;font-size:15px;line-height:20px;color:#363636;font-weight:normal;letter-spacing:-0.3px;">179,97</div>
<div class="t" style="left:354.5px;width:400px;text-align:right;top:645.9px;font-size:15px;line-height:20px;color:#363636;font-weight:normal;letter-spacing:-0.3px;">2.300,00</div>
<div class="t" style="left:498.5px;width:400px;text-align:right;top:645.9px;font-size:15px;line-height:20px;color:#363636;font-weight:normal;letter-spacing:-0.3px;">06:00</div>
<div class="t" style="left:908.5px;top:645.9px;font-size:15px;line-height:20px;color:#363636;font-weight:normal;letter-spacing:-0.3px;">R$</div>
<div class="t" style="left:610.5px;width:400px;text-align:right;top:645.9px;font-size:15px;line-height:20px;color:#363636;font-weight:normal;letter-spacing:-0.3px;">179,97</div>
<div class="t" style="left:354.5px;width:400px;text-align:right;top:670.9px;font-size:15px;line-height:20px;color:#363636;font-weight:normal;letter-spacing:-0.3px;">2.300,00</div>
<div class="t" style="left:498.5px;width:400px;text-align:right;top:670.9px;font-size:15px;line-height:20px;color:#363636;font-weight:normal;letter-spacing:-0.3px;">06:00</div>
<div class="t" style="left:908.5px;top:670.9px;font-size:15px;line-height:20px;color:#363636;font-weight:normal;letter-spacing:-0.3px;">R$</div>
<div class="t" style="left:610.5px;width:400px;text-align:right;top:670.9px;font-size:15px;line-height:20px;color:#363636;font-weight:normal;letter-spacing:-0.3px;">179,97</div>
<div class="t" style="left:-152.5px;width:400px;text-align:right;top:520.9px;font-size:15px;line-height:20px;color:#363636;font-weight:normal;letter-spacing:-0.3px;">16:00</div>
<div class="t" style="left:-69.5px;width:400px;text-align:right;top:520.9px;font-size:15px;line-height:20px;color:#363636;font-weight:normal;letter-spacing:-0.3px;">18:00</div>
<div class="t" style="left:37.5px;width:400px;text-align:right;top:520.9px;font-size:15px;line-height:20px;color:#363636;font-weight:normal;letter-spacing:-0.3px;">2:00</div>
<div class="t" style="left:245.5px;width:600px;text-align:center;top:520.9px;font-size:15px;line-height:20px;color:#363636;font-weight:normal;letter-spacing:-0.3px;">Hora extra normal</div>
<div class="t" style="left:1024.5px;top:520.9px;font-size:15px;line-height:20px;color:#363636;font-weight:normal;letter-spacing:-0.3px;">R$</div>
<div class="t" style="left:725.5px;width:400px;text-align:right;top:520.9px;font-size:15px;line-height:20px;color:#363636;font-weight:normal;letter-spacing:-0.3px;">269,96</div>
<div class="t" style="left:1139.5px;top:520.9px;font-size:15px;line-height:20px;color:#363636;font-weight:normal;letter-spacing:-0.3px;">R$</div>
<div class="t" style="left:846.5px;width:400px;text-align:right;top:520.9px;font-size:15px;line-height:20px;color:#363636;font-weight:normal;letter-spacing:-0.3px;">539,92</div>
<div class="t" style="left:-152.5px;width:400px;text-align:right;top:545.9px;font-size:15px;line-height:20px;color:#363636;font-weight:normal;letter-spacing:-0.3px;">16:00</div>
<div class="t" style="left:-69.5px;width:400px;text-align:right;top:545.9px;font-size:15px;line-height:20px;color:#363636;font-weight:normal;letter-spacing:-0.3px;">18:00</div>
<div class="t" style="left:37.5px;width:400px;text-align:right;top:545.9px;font-size:15px;line-height:20px;color:#363636;font-weight:normal;letter-spacing:-0.3px;">2:00</div>
<div class="t" style="left:245.5px;width:600px;text-align:center;top:545.9px;font-size:15px;line-height:20px;color:#363636;font-weight:normal;letter-spacing:-0.3px;">Hora extra normal</div>
<div class="t" style="left:1024.5px;top:545.9px;font-size:15px;line-height:20px;color:#363636;font-weight:normal;letter-spacing:-0.3px;">R$</div>
<div class="t" style="left:725.5px;width:400px;text-align:right;top:545.9px;font-size:15px;line-height:20px;color:#363636;font-weight:normal;letter-spacing:-0.3px;">269,96</div>
<div class="t" style="left:1139.5px;top:545.9px;font-size:15px;line-height:20px;color:#363636;font-weight:normal;letter-spacing:-0.3px;">R$</div>
<div class="t" style="left:846.5px;width:400px;text-align:right;top:545.9px;font-size:15px;line-height:20px;color:#363636;font-weight:normal;letter-spacing:-0.3px;">539,92</div>
<div class="t" style="left:-152.5px;width:400px;text-align:right;top:570.9px;font-size:15px;line-height:20px;color:#363636;font-weight:normal;letter-spacing:-0.3px;">22:00</div>
<div class="t" style="left:-69.5px;width:400px;text-align:right;top:570.9px;font-size:15px;line-height:20px;color:#363636;font-weight:normal;letter-spacing:-0.3px;">01:00</div>
<div class="t" style="left:37.5px;width:400px;text-align:right;top:570.9px;font-size:15px;line-height:20px;color:#363636;font-weight:normal;letter-spacing:-0.3px;">3:00</div>
<div class="t" style="left:245.5px;width:600px;text-align:center;top:570.9px;font-size:15px;line-height:20px;color:#363636;font-weight:normal;letter-spacing:-0.3px;">Hora extra noturna</div>
<div class="t" style="left:1024.5px;top:570.9px;font-size:15px;line-height:20px;color:#363636;font-weight:normal;letter-spacing:-0.3px;">R$</div>
<div class="t" style="left:725.5px;width:400px;text-align:right;top:570.9px;font-size:15px;line-height:20px;color:#363636;font-weight:normal;letter-spacing:-0.3px;">305,95</div>
<div class="t" style="left:1139.5px;top:570.9px;font-size:15px;line-height:20px;color:#363636;font-weight:normal;letter-spacing:-0.3px;">R$</div>
<div class="t" style="left:846.5px;width:400px;text-align:right;top:570.9px;font-size:15px;line-height:20px;color:#363636;font-weight:normal;letter-spacing:-0.3px;">917,85</div>
<div class="b" style="left:439px;top:566.5px;width:213.5px;height:27px;border:2px solid #1e6b41;box-sizing:border-box"></div>
<div class="b" style="left:649.5px;top:590px;width:5px;height:5px;background:#1e6b41;border:1px solid #fff;box-sizing:content-box"></div>
<div class="b" style="left:653px;top:574.5px;width:16px;height:16px;background:#f3f3f3;border:1px solid #c8c8c8;box-sizing:border-box"></div>
<svg class="b" style="left:657px;top:580.5px" width="8" height="5" viewBox="0 0 8 5"><path d="M0 0 H8 L4 4.5 Z" fill="#5a5a5a"/></svg>
<div class="b" style="left:169.8px;top:190.2px;width:1099.9px;height:437.3px;border:7.2px solid #fcc200;border-radius:5px;box-sizing:border-box"></div>
<div class="b" style="left:248px;top:136px;width:438px;height:60px;background:#fcc200;border-radius:7px 7px 0 0"></div>
<div class="t" style="left:160.39999999999998px;width:600px;text-align:center;top:144.5px;font-size:19.5px;line-height:20px;color:#111;font-weight:normal;letter-spacing:0.98px;-webkit-text-stroke:0.45px #111;">Registre as horas extras realizadas</div>
<div class="t" style="left:160.39999999999998px;width:600px;text-align:center;top:167.6px;font-size:19.5px;line-height:20px;color:#111;font-weight:normal;letter-spacing:1.85px;-webkit-text-stroke:0.45px #111;">diariamente por colaborador</div>
<div class="b" style="left:0px;top:679px;width:1300px;height:31px;background:#f3f3f3"></div>
<div class="b" style="left:16.5px;top:690px;width:2px;height:2px;background:#333;border-radius:50%"></div>
<div class="b" style="left:16.5px;top:694px;width:2px;height:2px;background:#333;border-radius:50%"></div>
<div class="b" style="left:16.5px;top:698px;width:2px;height:2px;background:#333;border-radius:50%"></div>
<svg class="b" style="left:38px;top:689px" width="8" height="10" viewBox="0 0 8 10"><path d="M7 0 V10 L0 5 Z" fill="#666"/></svg>
<div class="b" style="left:602px;top:690px;width:477px;height:9px;background:#777777;border-radius:5px"></div>
<div class="b" style="left:0px;top:711px;width:1300px;height:1px;background:#d8d8d8"></div>
<div class="b" style="left:0px;top:712px;width:1300px;height:19px;background:#f3f3f3"></div>
<div class="t" style="left:13px;top:713.0px;font-size:11.5px;line-height:20px;color:#262626;font-weight:normal;">Pronto</div>
<svg class="b" style="left:67px;top:715px" width="16" height="14" viewBox="0 0 16 14" fill="none" stroke="#333" stroke-width="1"><rect x="0.5" y="0.5" width="13" height="12"/><path d="M0.5 3.5 H13.5 M3 6 H6 M3 8.5 H5"/><circle cx="10" cy="9" r="3.3" fill="#f3f3f3"/><circle cx="10" cy="9" r="1.5" fill="#333"/></svg>
<svg class="b" style="left:99px;top:714px" width="16" height="16" viewBox="0 0 16 16" fill="none" stroke="#333" stroke-width="1"><circle cx="7" cy="2.5" r="1.8"/><path d="M1 5 L7 6 L13 5 M7 6 V10 L4 15 M7 10 L9 12"/><path d="M10 11 L15 16 M15 11 L10 16"/></svg>
<div class="t" style="left:118px;top:713.0px;font-size:10.6px;line-height:20px;color:#111;font-weight:bold;">Acessibilidade: investigar</div>
<div class="b" style="left:1068px;top:712px;width:34px;height:19px;background:#e6e6e6"></div>
<svg class="b" style="left:1080px;top:714px" width="14" height="14" viewBox="0 0 14 14" fill="none" stroke="#222" stroke-width="1.2"><rect x="0.6" y="0.6" width="12.8" height="12.8"/><path d="M4.9 0.6 V13.4 M9.1 0.6 V13.4 M0.6 4.9 H13.4 M0.6 9.1 H13.4"/></svg>
<div class="b" style="left:1101px;top:688px;width:197px;height:38px;background:#ffffff"></div>
<svg class="b" style="left:1100px;top:688px" width="40" height="40" viewBox="0 0 40 40">
<g transform="translate(20.5 20) scale(0.95) translate(-29.5 -148.5)">
<path d="M36.1 139.1 A11.5 11.5 0 1 0 40.5 151.9" fill="none" stroke="#4f9d81" stroke-width="2.6"/>
<path d="M22.8 147.6 L25.2 145.3 L29.8 149.6 L41.8 134.6 L43.6 135.6 L30.2 153.6 Z" fill="#4f9d81"/>
<path d="M31 163.5 C37 163.5, 42 158, 42.5 150" fill="none" stroke="#4f9d81" stroke-width="1.5"/>
<path d="M35 165.5 C39.5 164.5, 42.5 161, 43 156" fill="none" stroke="#4f9d81" stroke-width="1.2"/>
</g></svg>
<div class="t" style="left:1137.5px;top:696px;font-size:18px;line-height:24px;letter-spacing:-0.72px"><span style="color:#6a6a6a">Excel</span><span style="color:#4e9c80">Solucao.com.br</span></div>
</body></html>
